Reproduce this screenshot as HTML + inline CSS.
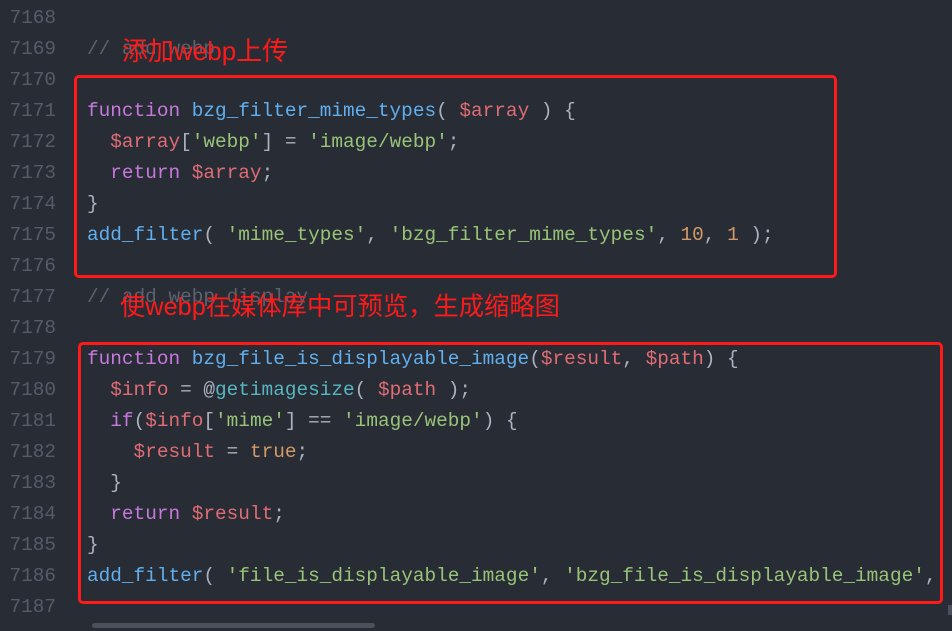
<!DOCTYPE html>
<html><head><meta charset="utf-8"><style>
body{margin:0;width:952px;height:631px;background:#282c34;overflow:hidden;position:relative;font-family:"Liberation Mono",monospace;font-size:19.4px;}
.l{position:absolute;left:0;height:31px;line-height:31px;white-space:pre;}
.n{position:absolute;left:0;width:56px;text-align:right;color:#555c69;}
.c{position:absolute;left:87px;color:#abb2bf;}
.k{color:#c678dd}.f{color:#61afef}.v{color:#e06c75}.s{color:#98c379}.o{color:#d19a66}.cy{color:#56b6c2}.cm{color:#5c6370}
.box{position:absolute;border:3px solid #ff1a1a;border-radius:5px;box-sizing:border-box}
.ann{position:absolute;color:#ff1a1a;font-family:"Liberation Sans","Noto Sans CJK SC",sans-serif;font-size:26px;line-height:30px;white-space:nowrap}
.sb{position:absolute;left:92px;top:623px;width:283px;height:5px;background:#4b505a;border-radius:3px}
</style></head><body>
<div class="l" style="top:3px"><span class="n">7168</span></div>
<div class="l" style="top:34px"><span class="n">7169</span><span class="c cm">// add webp</span></div>
<div class="l" style="top:65px"><span class="n">7170</span></div>
<div class="l" style="top:96px"><span class="n">7171</span><span class="c"><span class="k">function</span> <span class="f">bzg_filter_mime_types</span>( <span class="v">$array</span> ) {</span></div>
<div class="l" style="top:127px"><span class="n">7172</span><span class="c">  <span class="v">$array</span>[<span class="s">'webp'</span>] = <span class="s">'image/webp'</span>;</span></div>
<div class="l" style="top:158px"><span class="n">7173</span><span class="c">  <span class="k">return</span> <span class="v">$array</span>;</span></div>
<div class="l" style="top:189px"><span class="n">7174</span><span class="c">}</span></div>
<div class="l" style="top:220px"><span class="n">7175</span><span class="c"><span class="f">add_filter</span>( <span class="s">'mime_types'</span>, <span class="s">'bzg_filter_mime_types'</span>, <span class="o">10</span>, <span class="o">1</span> );</span></div>
<div class="l" style="top:251px"><span class="n">7176</span></div>
<div class="l" style="top:282px"><span class="n">7177</span><span class="c cm">// add webp display</span></div>
<div class="l" style="top:313px"><span class="n">7178</span></div>
<div class="l" style="top:344px"><span class="n">7179</span><span class="c"><span class="k">function</span> <span class="f">bzg_file_is_displayable_image</span>(<span class="v">$result</span>, <span class="v">$path</span>) {</span></div>
<div class="l" style="top:375px"><span class="n">7180</span><span class="c">  <span class="v">$info</span> = @<span class="cy">getimagesize</span>( <span class="v">$path</span> );</span></div>
<div class="l" style="top:406px"><span class="n">7181</span><span class="c">  <span class="k">if</span>(<span class="v">$info</span>[<span class="s">'mime'</span>] == <span class="s">'image/webp'</span>) {</span></div>
<div class="l" style="top:437px"><span class="n">7182</span><span class="c">    <span class="v">$result</span> = <span class="o">true</span>;</span></div>
<div class="l" style="top:468px"><span class="n">7183</span><span class="c">  }</span></div>
<div class="l" style="top:499px"><span class="n">7184</span><span class="c">  <span class="k">return</span> <span class="v">$result</span>;</span></div>
<div class="l" style="top:530px"><span class="n">7185</span><span class="c">}</span></div>
<div class="l" style="top:561px"><span class="n">7186</span><span class="c"><span class="f">add_filter</span>( <span class="s">'file_is_displayable_image'</span>, <span class="s">'bzg_file_is_displayable_image'</span>,</span></div>
<div class="l" style="top:592px"><span class="n">7187</span></div>
<div class="box" style="left:74px;top:75px;width:763px;height:203px"></div>
<div class="box" style="left:78px;top:342px;width:865px;height:262px"></div>
<div class="ann" style="left:122px;top:36px">添加webp上传</div>
<div class="ann" style="left:120px;top:292px;font-size:25.3px">使webp在媒体库中可预览，生成缩略图</div>
<div class="sb"></div>
<div style="position:absolute;left:948px;top:605px;width:4px;height:10px;background:#4b505a"></div>
</body></html>
